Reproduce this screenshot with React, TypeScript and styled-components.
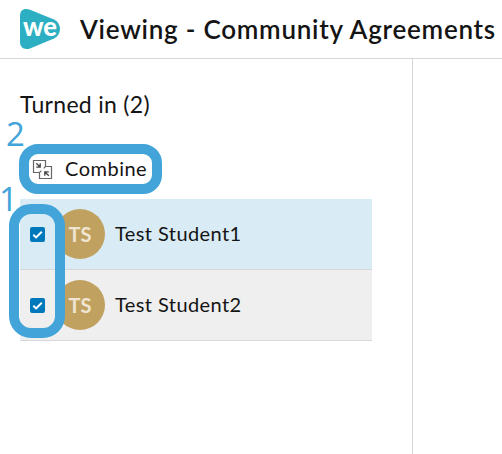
import React from "react";
import styled, { createGlobalStyle } from "styled-components";

const GlobalStyle = createGlobalStyle`
  * { box-sizing: border-box; }
  body { margin: 0; background: #fff; color: #141414; font-family: Lato, sans-serif; overflow: hidden; }
`;

const Page = styled.div`
  display: flex;
  flex-direction: column;
  width: 502px;
  height: 454px;
  overflow: hidden;
`;

const Header = styled.header`
  display: flex;
  align-items: center;
  gap: 20px;
  height: 59px;
  padding-left: 20px;
  border-bottom: 1px solid #d6d6d6;
`;

const Title = styled.h1`
  margin: 0;
  font-size: 26px;
  line-height: 32px;
  font-weight: 600;
  letter-spacing: 0.75px;
  white-space: nowrap;
`;

const Sidebar = styled.aside`
  position: relative;
  flex: 1;
  width: 413px;
  padding: 29px 40px 0 20px;
  border-right: 1px solid #d6d6d6;
`;

const SectionTitle = styled.h2`
  margin: 0;
  font-size: 23px;
  line-height: 32px;
  font-weight: 400;
  letter-spacing: 0.3px;
  white-space: nowrap;
`;

const CombineButton = styled.button`
  display: flex;
  align-items: center;
  gap: 12px;
  width: 143px;
  height: 50px;
  margin: 24px 0 5px -1px;
  padding: 0 0 0 3px;
  border: 10px solid #43a4d9;
  border-radius: 19px;
  background: #fff;
  color: #141414;
  font: 400 20px/28px Lato, sans-serif;
  letter-spacing: 0.5px;
`;

const ButtonLabel = styled.span`
  padding-bottom: 2px;
`;

const Row = styled.div<{ $selected?: boolean }>`
  display: flex;
  align-items: center;
  width: 352px;
  height: 71px;
  padding-left: 10px;
  border-bottom: 1px solid #d6d8da;
  background: ${(p) => (p.$selected ? "#d9ebf5" : "#efefef")};
`;

const Checkbox = styled.span`
  display: flex;
  width: 15px;
  height: 15px;
  border-radius: 2px;
  background: #0079bc;
`;

const Avatar = styled.span`
  display: flex;
  align-items: center;
  justify-content: center;
  width: 50px;
  height: 50px;
  margin: 0 10px;
  border-radius: 50%;
  background: #c1a15f;
  color: #efe5d2;
  font-size: 20px;
  font-weight: 700;
`;

const Name = styled.span`
  padding-bottom: 2px;
  font-size: 20px;
  letter-spacing: 0.42px;
  white-space: nowrap;
`;

const StepNumber = styled.span<{ $x: number; $y: number }>`
  position: absolute;
  left: ${(p) => p.$x}px;
  top: ${(p) => p.$y}px;
  color: #43a4d9;
  font: 400 33px/36px "Open Sans", sans-serif;
`;

const SelectionRing = styled.div`
  position: absolute;
  left: 9px;
  top: 145px;
  width: 56px;
  height: 134px;
  border: 10px solid #43a4d9;
  border-radius: 22px;
`;

const LogoMark = styled.svg`
  display: block;
  flex: none;
`;

const LogoText = styled.text`
  font-family: Lato, sans-serif;
  font-size: 26px;
  font-weight: 900;
  fill: #fff;
`;

const Logo = () => (
  <LogoMark width="40" height="42" viewBox="0 0 40 42">
    <path d="M0 8C0 2 4 -0.3 10 1.7L34 11.5C42 15.5 42 26.5 34 30.5L10 40.4C4 42.3 0 39.5 0 34Z" fill="#2cafc2" />
    <LogoText x="3" y="28" textLength="34" lengthAdjust="spacingAndGlyphs">we</LogoText>
  </LogoMark>
);

const CombineIcon = () => (
  <svg width="21" height="21" viewBox="0 0 21 21" fill="none">
    <g stroke="#666" strokeWidth="1.2">
      <path d="M7.5 13.5H1.5V1.5H13.5V7.5H19.5V19.5H7.5V13.5L9.3 11.7M13.5 7.5L11.7 9.3" />
    </g>
    <g stroke="#444" strokeWidth="1.3">
      <path d="M4.3 4.3L7.8 7.8M8.2 4.3V8.2H4.3" />
      <path d="M16.8 16.8L13.2 13.2M12.8 16.8V12.8H16.8" />
    </g>
  </svg>
);

const Check = () => (
  <svg width="15" height="15" viewBox="0 0 15 15" fill="none">
    <path d="M3.3 7.7L6.1 10.4L11.8 4.7" stroke="#fff" strokeWidth="2" />
  </svg>
);

const students = [
  { name: "Test Student1", selected: true },
  { name: "Test Student2", selected: false },
];

export default function App() {
  return (
    <Page>
      <GlobalStyle />
      <Header>
        <Logo />
        <Title>Viewing - Community Agreements</Title>
      </Header>
      <Sidebar>
        <SectionTitle>Turned in (2)</SectionTitle>
        <CombineButton>
          <CombineIcon />
          <ButtonLabel>Combine</ButtonLabel>
        </CombineButton>
        {students.map((s) => (
          <Row key={s.name} $selected={s.selected}>
            <Checkbox>
              <Check />
            </Checkbox>
            <Avatar>TS</Avatar>
            <Name>{s.name}</Name>
          </Row>
        ))}
        <StepNumber $x={6} $y={57}>2</StepNumber>
        <StepNumber $x={-1} $y={122}>1</StepNumber>
        <SelectionRing />
      </Sidebar>
    </Page>
  );
}
